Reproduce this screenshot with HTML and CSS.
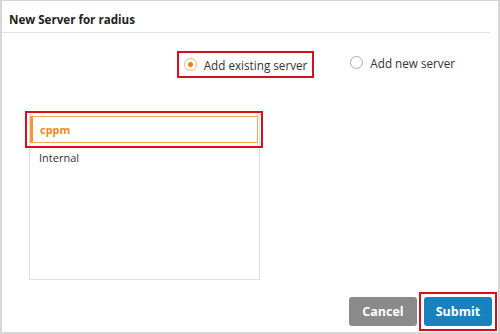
FILE: index.html
```html
<!DOCTYPE html>
<html>
<head>
    <title>New Server for radius</title>
    <link rel="stylesheet" href="styles.css">
</head>
<body>
    <div class="dialog">
        <div class="dialog-header">New Server for radius</div>

        <div class="radio-row">
            <label class="radio-option highlight">
                <span class="radio checked"></span>
                Add existing server
            </label>
            <label class="radio-option">
                <span class="radio"></span>
                Add new server
            </label>
        </div>

        <div class="server-list">
            <div class="list-highlight">
                <div class="list-item selected">cppm</div>
            </div>
            <div class="list-item">Internal</div>
        </div>

        <div class="dialog-footer">
            <button class="btn btn-cancel">Cancel</button>
            <span class="btn-highlight">
                <button class="btn btn-submit">Submit</button>
            </span>
        </div>
    </div>
</body>
</html>
```

FILE: styles.css
```css
body {
    margin: 0;
    font-family: "Open Sans", "Liberation Sans", sans-serif;
    color: #333;
    background: #fff;
}
.dialog {
    width: 500px;
    height: 334px;
    box-sizing: border-box;
    border: 2px solid #d6d6d6;
    border-top-width: 1px;
    display: flex;
    flex-direction: column;
}
.dialog-header {
    height: 32px;
    box-sizing: border-box;
    padding: 11px 0 0 7px;
    margin-right: 8px;
    font-size: 11.6px;
    font-weight: 700;
    color: #222;
    border-bottom: 1px solid #e2e2e2;
}
.radio-row {
    display: flex;
    justify-content: flex-end;
    gap: 36px;
    margin-top: 18px;
    padding-right: 43px;
}
.radio-option {
    display: flex;
    align-items: center;
    gap: 7px;
    font-size: 11.7px;
    color: #333;
    height: 23px;
}
.radio-option.highlight {
    border: 2px solid #d4101e;
    padding: 0 5px 0 5px;
}
.radio {
    width: 13px;
    height: 13px;
    box-sizing: border-box;
    border: 1px solid #aaa;
    border-radius: 50%;
    background: #fff;
    position: relative;
}
.radio.checked {
    border-color: #f0b070;
}
.radio.checked::after {
    content: "";
    position: absolute;
    left: 3px;
    top: 3px;
    width: 5px;
    height: 5px;
    border-radius: 50%;
    background: #f07f1a;
}
.server-list {
    margin: 35px 0 0 27px;
    width: 231px;
    height: 167px;
    box-sizing: border-box;
    border: 1px solid #e0e0e0;
    border-top: none;
}
.list-highlight {
    margin: -2px -4px 0 -5px;
    border: 2px solid #d4101e;
    padding: 3px;
}
.list-item {
    font-size: 11px;
    padding: 2px 9px;
    color: #333;
}
.list-item.selected {
    height: 27px;
    box-sizing: border-box;
    padding: 5px 7px;
    border: 1px solid #f2a654;
    border-left: 3px solid #f29a3a;
    color: #ee8a1e;
    font-weight: 700;
}
.dialog-footer {
    display: flex;
    justify-content: flex-end;
    align-items: center;
    gap: 2px;
    margin-top: auto;
    padding: 0 1px 1px 0;
}
.btn {
    font-family: "Open Sans", "Liberation Sans", sans-serif;
    font-size: 12.5px;
    font-weight: 700;
    color: #fff;
    border: none;
    border-radius: 3px;
    height: 29px;
    width: 68px;
    cursor: pointer;
}
.btn-cancel {
    background: #8a8a8a;
}
.btn-highlight {
    border: 2px solid #d4101e;
    padding: 3px;
}
.btn-submit {
    display: block;
    background: #1a81bf;
}
```
